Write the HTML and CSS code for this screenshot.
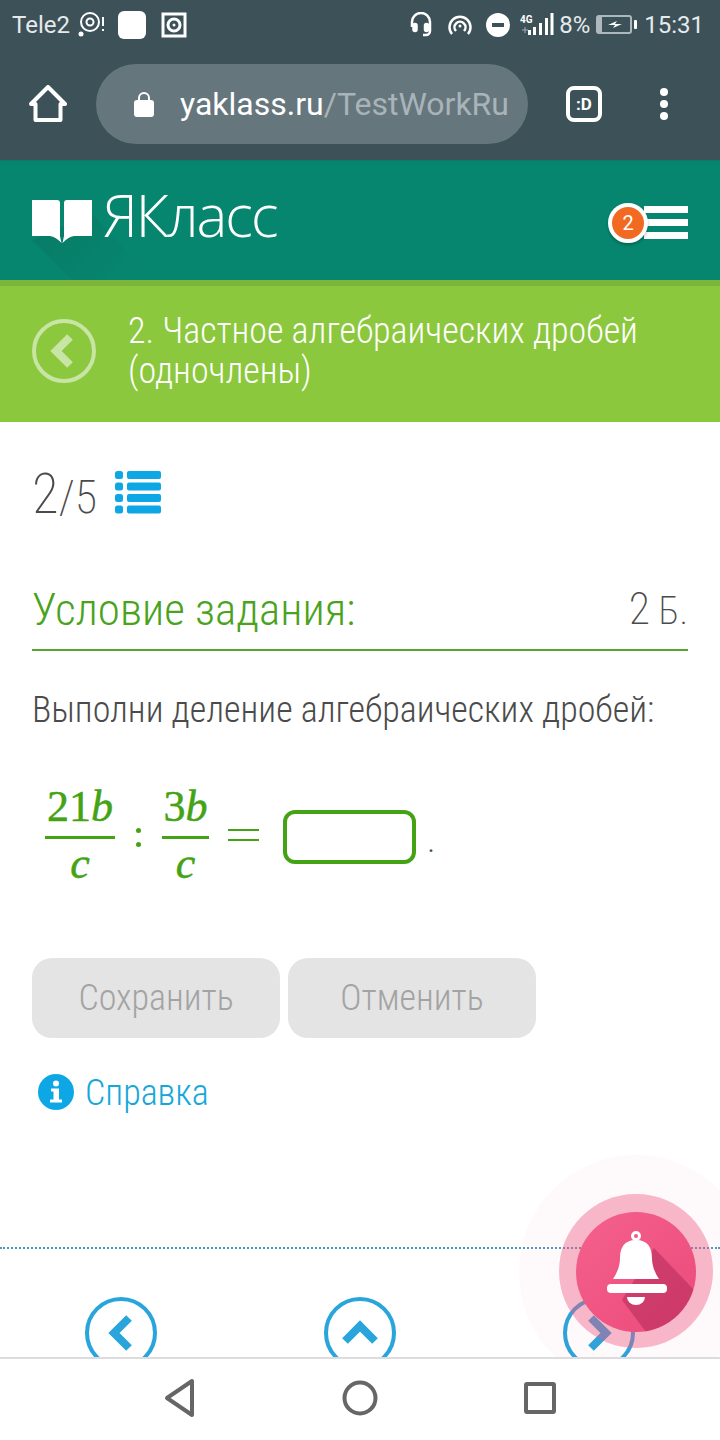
FILE: index.html
```html
<!DOCTYPE html>
<html lang="ru">
<head>
<meta charset="utf-8">
<title>ЯКласс</title>
<link rel="stylesheet" href="styles.css">
</head>
<body>
<div class="phone">
  <div class="chrome">
    <div class="status">
      <span class="carrier">Tele2</span>
      <svg class="st-ic st-gap-a" width="28" height="28" viewBox="0 0 28 28" fill="none" stroke="#fff"><circle cx="12" cy="11" r="9" stroke-width="2"/><circle cx="12" cy="11" r="3.5" stroke-width="2"/><circle cx="3" cy="23" r="2.5" fill="#fff" stroke="none"/><path d="M25 6v9M25 18v2" stroke-width="2"/></svg>
      <span class="st-square"></span>
      <svg class="st-ic st-gap-b" width="26" height="26" viewBox="0 0 26 26" fill="none" stroke="#fff"><rect x="2" y="2" width="22" height="22" stroke-width="3"/><circle cx="13" cy="13" r="6" stroke-width="3"/><circle cx="13" cy="13" r="1.5" fill="#fff" stroke="none"/></svg>
      <span class="st-spacer"></span>
      <svg width="24" height="26" viewBox="0 0 24 26" fill="none" stroke="#fff" stroke-width="2.5"><path d="M3 15V10a9 9 0 0 1 18 0v9a4 4 0 0 1-4 4h-3"/><rect x="4.500" y="12" width="3" height="7" rx="1.500" fill="#fff"/><rect x="16" y="12" width="3" height="7" rx="1.500" fill="#fff"/></svg>
      <svg class="st-m1" width="24" height="24" viewBox="0 0 24 24" fill="none" stroke="#fff" stroke-width="2.500"><path d="M4 21a10.500 10.500 0 1 1 16 0"/><path d="M8 18a5.500 5.500 0 1 1 8 0"/><circle cx="12" cy="13" r="1.500" fill="#fff" stroke="none"/></svg>
      <svg class="st-m2" width="24" height="24" viewBox="0 0 24 24"><circle cx="12" cy="12" r="12" fill="#fff"/><rect x="6" y="10" width="12" height="4" fill="#3d5159"/></svg>
      <svg class="st-m3" width="34" height="26" viewBox="0 0 34 26" fill="#fff"><text x="0" y="11" class="st-4g">4G</text><path d="M2 18h6M5 15v6" stroke="#aab" stroke-width="1"/><rect x="8" y="18" width="3" height="5"/><rect x="13" y="15" width="3" height="8"/><rect x="19" y="11" width="3" height="12"/><rect x="25" y="6" width="3" height="17"/><rect x="30.500" y="1" width="3" height="22"/></svg>
      <span class="batt-pct">8%</span>
      <svg class="st-m4" width="42" height="20" viewBox="0 0 42 20" fill="none"><rect x="1" y="1" width="34" height="17" rx="2" stroke="#aeb8bc" stroke-width="2"/><rect x="2" y="2" width="4" height="15" fill="#aeb8bc"/><path d="M12 10l9-4-2 3h7l-9 4 2-3z" fill="#fff"/><rect x="38" y="5" width="3" height="9" rx="1" fill="#fff"/></svg>
      <span class="clock">15:31</span>
    </div>
    <div class="toolbar">
      <svg class="home" width="38" height="38" viewBox="0 0 38 38" fill="none" stroke="#fff" stroke-width="4" stroke-linejoin="round"><path d="M2 19L19 2l17 17h-4.500v16h-25V19z"/></svg>
      <div class="omnibox">
        <svg class="lock" width="22" height="28" viewBox="0 0 22 28"><path d="M6 12V8a5 5 0 0 1 10 0v4" fill="none" stroke="#fff" stroke-width="2"/><rect x="1" y="10" width="20" height="17" rx="3" fill="#fff"/></svg>
        <span class="url"><span class="url-host">yaklass.ru</span><span class="url-path">/TestWorkRu</span></span>
      </div>
      <span class="tabs">:D</span>
      <span class="dots"><i></i><i></i><i></i></span>
    </div>
  </div>

  <header class="brand">
    <span class="logo-shadow"></span>
    <svg class="book" width="60" height="44" viewBox="0 0 60 44" fill="#fff"><path d="M0 0H25Q28 0 28 3V36L29.500 43Q24 37 18 36H0Z"/><path d="M60 0H35Q32 0 32 3V36L30.500 43Q36 37 42 36H60Z"/></svg>
    <span class="logo-text">ЯКласс</span>
    <span class="brand-spacer"></span>
    <span class="menu">
      <span class="menu-lines"><i></i><i></i><i></i></span>
      <span class="badge">2</span>
    </span>
  </header>

  <div class="topic">
    <span class="back"><svg width="26" height="36" viewBox="0 0 26 36" fill="none" stroke="#c9e5a5" stroke-width="8"><path d="M21 4L7 18l14 14"/></svg></span>
    <h1 class="topic-title">2. Частное алгебраических дробей (одночлены)</h1>
  </div>

  <main class="content">
    <div class="counter">
      <span class="count-now">2</span><span class="count-all">/5</span>
      <svg class="list-ic" width="46" height="43" viewBox="0 0 46 43" fill="#0ea7e6"><rect x="0" y="0" width="8" height="8" rx="2.500"/><rect x="12" y="0" width="34" height="8" rx="2"/><rect x="0" y="11.500" width="8" height="8" rx="2.500"/><rect x="12" y="11.500" width="34" height="8" rx="2"/><rect x="0" y="23" width="8" height="8" rx="2.500"/><rect x="12" y="23" width="34" height="8" rx="2"/><rect x="0" y="34.500" width="8" height="8" rx="2.500"/><rect x="12" y="34.500" width="34" height="8" rx="2"/></svg>
    </div>
    <div class="cond-head">
      <h2 class="cond-title">Условие задания:</h2>
      <span class="points"><span class="points-num">2</span> Б.</span>
    </div>
    <p class="prompt">Выполни деление алгебраических дробей:</p>
    <div class="math">
      <span class="frac frac-a"><span class="num">21<em>b</em></span><span class="den"><em>c</em></span></span>
      <span class="colon"><i></i><i></i></span>
      <span class="frac frac-b"><span class="num">3<em>b</em></span><span class="den"><em>c</em></span></span>
      <span class="equals"><i></i><i></i></span>
      <span class="answer"></span>
      <span class="period">.</span>
    </div>
    <div class="actions">
      <span class="btn">Сохранить</span>
      <span class="btn">Отменить</span>
    </div>
    <div class="help">
      <svg width="36" height="36" viewBox="0 0 36 36"><circle cx="18" cy="18" r="18" fill="#0ea7e6"/><circle cx="18" cy="9.500" r="3" fill="#fff"/><path d="M13 14.500h8v11h3v3H12v-3h3.500v-8H13z" fill="#fff"/></svg>
      <span class="help-text">Справка</span>
    </div>
    <div class="pager">
      <span class="pager-btn"><svg width="32" height="40" viewBox="0 0 32 40" fill="none" stroke="#29a5dc" stroke-width="8"><path d="M24 5L9 20l15 15"/></svg></span>
      <span class="pager-btn"><svg width="40" height="32" viewBox="0 0 40 32" fill="none" stroke="#29a5dc" stroke-width="8"><path d="M5 24L20 9l15 15"/></svg></span>
      <span class="pager-btn"><svg width="32" height="40" viewBox="0 0 32 40" fill="none" stroke="#29a5dc" stroke-width="8"><path d="M8 5l15 15L8 35"/></svg></span>
    </div>
    <div class="bell-wrap">
      <span class="bell-halo"></span>
      <span class="bell-ring"></span>
      <span class="bell-core">
        <svg class="bell-svg" width="120" height="120" viewBox="0 0 120 120"><path d="M78 36L120 80V120H70L46 88Z" fill="#b92f5d" opacity=".62"/><circle cx="60" cy="24" r="3.500" fill="none" stroke="#fff" stroke-width="3"/><path d="M60 28c-12 0-16 8-16 18 0 8-3 15-7 21h46c-4-6-7-13-7-21 0-10-4-18-16-18z" fill="#fff"/><rect x="31" y="72" width="60" height="9" rx="4" fill="#fff"/><path d="M51 85h18a9 8 0 0 1-18 0z" fill="#fff"/></svg>
      </span>
    </div>
  </main>

  <nav class="sysnav">
    <svg width="34" height="40" viewBox="0 0 34 40" fill="none" stroke="#666" stroke-width="4" stroke-linejoin="round"><path d="M29 3v34L4 20z"/></svg>
    <svg width="38" height="38" viewBox="0 0 38 38" fill="none" stroke="#666" stroke-width="4"><circle cx="19" cy="19" r="15.500"/></svg>
    <svg width="34" height="34" viewBox="0 0 34 34" fill="none" stroke="#666" stroke-width="4" stroke-linejoin="round"><rect x="3" y="3" width="28" height="28" rx="1"/></svg>
  </nav>
</div>
</body>
</html>
```

FILE: styles.css
```css
* { box-sizing: border-box; }
html, body { margin: 0; padding: 0; }
body { background: #fff; font-family: Roboto, "Noto Sans", sans-serif; }
i { display: block; }

.phone { width: 720px; height: 1440px; display: flex; flex-direction: column; overflow: hidden; }

.chrome { background: #3d5159; height: 160px; flex: none; color: #fff; }
.status { height: 48px; display: flex; align-items: center; padding: 1px 16px 0 12px; }
.carrier, .batt-pct, .clock { font-size: 24px; color: #e6eaec; font-weight: 400; }
.st-ic { flex: none; }
.st-gap-a { margin-left: 8px; }
.st-square { width: 28px; height: 28px; background: #fff; border-radius: 6px; margin-left: 12px; }
.st-gap-b { margin-left: 15px; }
.st-spacer { flex: 1; }
.st-m1 { margin-left: 15px; }
.st-m2 { margin-left: 14px; }
.st-m3 { margin-left: 10px; }
.st-4g { font-size: 10px; font-weight: 700; font-family: "Roboto", sans-serif; }
.batt-pct { margin-left: 5px; }
.st-m4 { margin-left: 6px; }
.clock { margin-left: 6px; }

.toolbar { height: 112px; display: flex; align-items: center; padding: 0 0 0 29px; position: relative; }
.home { flex: none; }
.omnibox { width: 432px; height: 80px; margin-left: 29px; background: #66767d; border-radius: 40px; display: flex; align-items: center; padding-left: 37px; overflow: hidden; flex: none; }
.lock { flex: none; }
.url { margin-left: 25px; font-size: 32px; white-space: nowrap; }
.url-host { color: #fff; }
.url-path { color: #a9b4b9; }
.tabs { width: 36px; height: 36px; margin-left: 38px; border: 4px solid #fff; border-radius: 8px; font-size: 17px; font-weight: 700; display: flex; align-items: center; justify-content: center; flex: none; }
.dots { margin-left: 58px; display: flex; flex-direction: column; gap: 4px; }
.dots i { width: 8px; height: 8px; border-radius: 50%; background: #fff; }

.brand { height: 120px; flex: none; background: #07866f; display: flex; align-items: flex-start; padding: 39px 32px 0; position: relative; overflow: hidden; border-top: 1px solid #0f7a69; }
.logo-shadow { position: absolute; left: 32px; top: 53px; width: 122px; height: 66px; background: linear-gradient(135deg, rgba(0,0,0,.09), rgba(0,0,0,0) 85%); clip-path: polygon(0 26px, 60px 0, 122px 66px, 40px 66px); }
.book { position: relative; flex: none; }
.logo-text { position: relative; font-family: "Open Sans", sans-serif; font-size: 58px; font-weight: 300; color: #fff; margin-left: 11px; margin-top: -5px; line-height: 40px; letter-spacing: -2px; }
.brand-spacer { flex: 1; }
.menu { position: relative; width: 80px; height: 50px; margin-top: 3px; }
.menu-lines { position: absolute; right: 0; top: 3px; width: 44px; display: flex; flex-direction: column; gap: 6px; }
.menu-lines i { height: 7px; background: #fff; }
.badge { position: absolute; left: 0; top: 0; width: 40px; height: 40px; border-radius: 50%; background: #f26a21; border: 4px solid #fff; color: #fff; font-size: 20px; display: flex; align-items: center; justify-content: center; box-shadow: 0 2px 3px rgba(0,0,0,.25); }

.topic { height: 142px; flex: none; background: #8cc83e; border-top: 6px solid #7cb53a; display: flex; align-items: center; padding: 0 32px 6px; }
.back { width: 64px; height: 64px; border: 4px solid #c9e5a5; border-radius: 50%; display: flex; align-items: center; justify-content: center; flex: none; padding-right: 4px; }
.topic-title { margin: 0 0 0 32px; font-size: 36px; line-height: 40px; font-weight: 300; color: #fff; font-stretch: 75%; }

.content { flex: 1; position: relative; overflow: hidden; background: #fff; padding: 0 32px; }
.counter { height: 64px; margin-top: 40px; display: flex; align-items: baseline; color: #4b4b4b; font-weight: 200; font-stretch: 75%; }
.count-now { font-size: 55px; line-height: 64px; }
.count-all { font-size: 46px; }
.list-ic { align-self: flex-start; margin: 9px 0 0 18px; }
.cond-head { height: 86px; margin-top: 39px; display: flex; justify-content: space-between; align-items: center; border-bottom: 2px solid #55a632; font-weight: 300; font-stretch: 75%; }
.cond-title { margin: 4px 0 0; font-size: 45px; font-weight: 300; color: #4aa31c; }
.points { font-size: 38px; color: #4b4b4b; margin-top: 4px; font-weight: 200; }
.points-num { font-size: 44px; }
.prompt { margin: 37px 0 0; font-size: 36px; line-height: 44px; font-weight: 300; font-stretch: 75%; color: #4b4b4b; }

.math { height: 116px; margin-top: 45px; position: relative; display: flex; align-items: center; color: #44a315; font-family: "Liberation Serif", serif; font-weight: 400; -webkit-text-stroke: .5px #44a315; }
.frac { display: flex; flex-direction: column; align-items: center; font-size: 44px; line-height: 46px; }
.frac em { font-style: italic; }
.num { border-bottom: 3px solid #44a315; width: 100%; text-align: center; padding-bottom: 6px; white-space: nowrap; }
.den { padding-top: 2px; }
.frac-a { width: 70px; margin-left: 13px; }
.frac-b { width: 47px; margin-left: 47px; }
.colon { position: absolute; left: 104px; top: 51px; display: flex; flex-direction: column; gap: 9px; }
.colon i { width: 5px; height: 5px; border-radius: 50%; background: #44a315; }
.equals { width: 31px; margin-left: 19px; display: flex; flex-direction: column; gap: 8px; }
.equals i { height: 2px; background: #44a315; }
.answer { width: 133px; height: 54px; margin: 4px 0 0 24px; border: 4px solid #44a315; border-radius: 12px; background: #fff; }
.period { margin-left: 12px; font-size: 24px; color: #4b4b4b; -webkit-text-stroke: 0; padding-top: 18px; }

.actions { margin-top: 65px; display: flex; gap: 8px; }
.btn { width: 248px; height: 80px; background: #e4e4e4; border-radius: 20px; display: flex; align-items: center; justify-content: center; font-size: 36px; font-weight: 300; font-stretch: 75%; color: #a3a3a3; }
.help { margin-top: 31px; margin-left: 6px; display: flex; align-items: center; gap: 11px; }
.help-text { font-size: 36px; font-weight: 300; font-stretch: 75%; color: #14a7d9; padding-top: 3px; }

.pager { position: absolute; left: 0; right: 0; top: 825px; border-top: 2px dotted #4a9bbd; display: flex; justify-content: space-between; padding: 48px 85px 0; }
.pager-btn { width: 72px; height: 72px; border: 4px solid #29a5dc; border-radius: 50%; display: flex; align-items: center; justify-content: center; flex: none; }

.bell-wrap { position: absolute; left: 516px; top: 730px; width: 240px; height: 240px; }
.bell-halo { position: absolute; inset: 3px; border-radius: 50%; background: rgba(240, 90, 130, .035); }
.bell-ring { position: absolute; left: 43px; top: 42px; width: 154px; height: 154px; border-radius: 50%; background: rgba(240, 90, 130, .42); }
.bell-core { position: absolute; left: 60px; top: 60px; width: 120px; height: 120px; border-radius: 50%; background: linear-gradient(135deg, #f4618c, #ec4a7a); overflow: hidden; }
.bell-svg { display: block; }

.sysnav { height: 83px; flex: none; background: #fff; border-top: 2px solid #dcdcdc; display: flex; align-items: center; justify-content: center; gap: 144px; padding-bottom: 4px; }
```
